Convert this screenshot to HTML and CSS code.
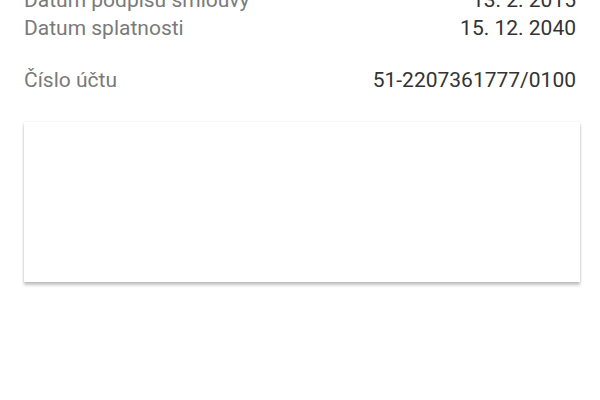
FILE: index.html
```html
<!DOCTYPE html>
<html lang="cs">
<head>
<meta charset="utf-8">
<link rel="stylesheet" href="styles.css">
</head>
<body>
<div class="page">
  <div class="group first">
    <div class="row"><span class="label">Datum podpisu smlouvy</span><span class="value">13. 2. 2015</span></div>
    <div class="row"><span class="label">Datum splatnosti</span><span class="value">15. 12. 2040</span></div>
  </div>
  <div class="group account">
    <div class="row"><span class="label">Číslo účtu</span><span class="value">51-2207361777/0100</span></div>
  </div>
  <div class="card"></div>
</div>
</body>
</html>
```
FILE: styles.css
```css
html, body {
  margin: 0;
  padding: 0;
  background: #ffffff;
}
.page {
  font-family: Roboto, "Liberation Sans", sans-serif;
  font-size: 21px;
  line-height: 28px;
  padding: 0 24px 60px 24px;
}
.group.first {
  margin-top: -14px;
}
.group.account {
  margin-top: 24px;
}
.row {
  display: flex;
  justify-content: space-between;
}
.label {
  color: #7a7a7a;
}
.value {
  color: #333333;
}
.card {
  margin-top: 28px;
  width: 556px;
  height: 160px;
  background: #ffffff;
  box-shadow: 0 3px 3px rgba(0, 0, 0, 0.24), 0 0 2px rgba(0, 0, 0, 0.1);
}
```
